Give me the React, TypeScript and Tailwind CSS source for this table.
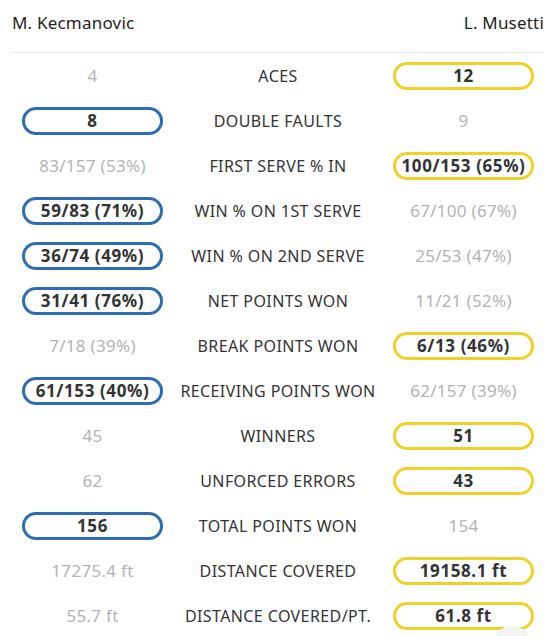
import React from "react";

type Row = { label: string; l: string; r: string; w: "l" | "r" };

const rows: Row[] = [
  { label: "ACES", l: "4", r: "12", w: "r" },
  { label: "DOUBLE FAULTS", l: "8", r: "9", w: "l" },
  { label: "FIRST SERVE % IN", l: "83/157 (53%)", r: "100/153 (65%)", w: "r" },
  { label: "WIN % ON 1ST SERVE", l: "59/83 (71%)", r: "67/100 (67%)", w: "l" },
  { label: "WIN % ON 2ND SERVE", l: "36/74 (49%)", r: "25/53 (47%)", w: "l" },
  { label: "NET POINTS WON", l: "31/41 (76%)", r: "11/21 (52%)", w: "l" },
  { label: "BREAK POINTS WON", l: "7/18 (39%)", r: "6/13 (46%)", w: "r" },
  { label: "RECEIVING POINTS WON", l: "61/153 (40%)", r: "62/157 (39%)", w: "l" },
  { label: "WINNERS", l: "45", r: "51", w: "r" },
  { label: "UNFORCED ERRORS", l: "62", r: "43", w: "r" },
  { label: "TOTAL POINTS WON", l: "156", r: "154", w: "l" },
  { label: "DISTANCE COVERED", l: "17275.4 ft", r: "19158.1 ft", w: "r" },
  { label: "DISTANCE COVERED/PT.", l: "55.7 ft", r: "61.8 ft", w: "r" },
];

function Cell({ v, win, side }: { v: string; win: boolean; side: "l" | "r" }) {
  return (
    <div className="flex items-center justify-center px-[10px]">
      {win ? (
        <div
          className={
            "w-full h-[28px] rounded-full border-[3px] flex items-center justify-center text-[17px] font-bold text-[#333] tracking-[0.6px] whitespace-nowrap " +
            (side === "l" ? "border-[#2e6db4]" : "border-[#f0d12a]")
          }
        >
          {v}
        </div>
      ) : (
        <div className="text-[17px] text-[#b3b3b3] tracking-[0.3px] whitespace-nowrap">{v}</div>
      )}
    </div>
  );
}

export default function App() {
  return (
    <div
      className="relative w-[559px] h-[636px] bg-white overflow-hidden"
      style={{ fontFamily: '"Noto Sans", "Open Sans", sans-serif' }}
    >
      <div className="ml-[12px] w-[532px]">
        <div className="h-[53px] flex items-center justify-between border-b border-[#e4e4e4] text-[17px] text-[#222] pb-[6px] tracking-[0.2px]">
          <span>M. Kecmanovic</span>
          <span>L. Musetti</span>
        </div>
        {rows.map((row) => (
          <div
            key={row.label}
            className="grid grid-cols-[161px_210px_161px] h-[45px] items-center"
          >
            <Cell v={row.l} win={row.w === "l"} side="l" />
            <div className="text-center text-[16px] text-[#333] tracking-[0.4px] whitespace-nowrap">
              {row.label}
            </div>
            <Cell v={row.r} win={row.w === "r"} side="r" />
          </div>
        ))}
      </div>
      <div className="absolute left-[492px] top-[626px] w-[40px] h-[40px] rounded-full bg-[#f4f4f4]" />
    </div>
  );
}
